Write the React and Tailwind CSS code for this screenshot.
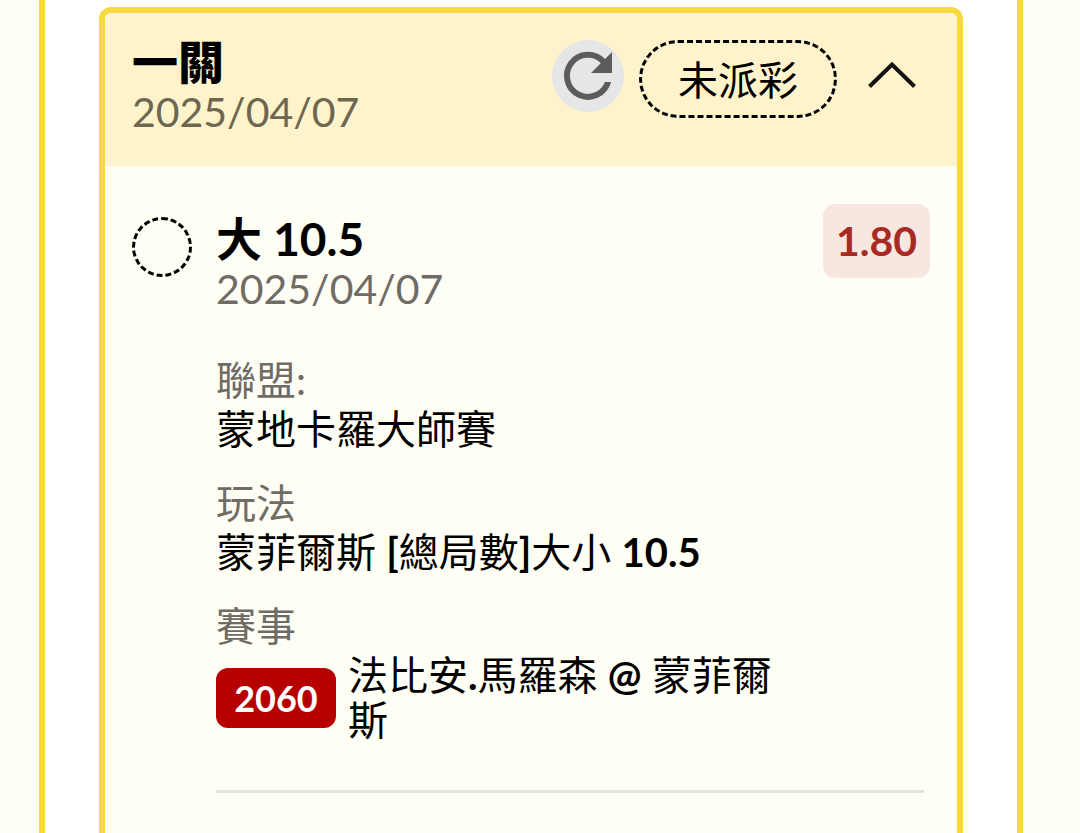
const legs = [
  {
    pick: "大",
    line: "10.5",
    date: "2025/04/07",
    odds: "1.80",
    league: "蒙地卡羅大師賽",
    code: "2060",
  },
];

function RefreshIcon() {
  return (
    <svg viewBox="0 0 72 72" className="size-full" aria-hidden="true">
      <path
        d="M51.5 21.7 A21 21 0 1 0 56.3 41"
        fill="none"
        stroke="#5c5c5e"
        strokeWidth="6"
      />
      <path d="M60 12 V33 H39 Z" fill="#5c5c5e" />
      <path d="M52 38 H62 V42 H52 Z" fill="#e5e6e8" />
    </svg>
  );
}

function ChevronUpIcon() {
  return (
    <svg viewBox="0 0 48 28" className="h-7 w-12" aria-hidden="true">
      <path d="M1.5 24.5 L24 2.5 L46.5 24.5" fill="none" stroke="#111" strokeWidth="4" />
    </svg>
  );
}

function Header() {
  return (
    <header className="flex items-start bg-[#fff3cc] px-[27px] pb-[29px] pt-6">
      <div className="flex-1 leading-[50px]">
        <h1 className="text-[46px] font-black">一關</h1>
        <time className="block text-[41px] text-[#6d6650]">2025/04/07</time>
      </div>
      <div className="flex items-start pt-[3px]">
        <button
          type="button"
          aria-label="重新整理"
          className="mr-[15px] size-[72px] rounded-full bg-[#e5e6e8]"
        >
          <RefreshIcon />
        </button>
        <span className="mr-[31px] flex h-[78px] w-[198px] items-center justify-center rounded-full border-3 border-dashed border-black pt-0.5 text-[40px]">
          未派彩
        </span>
        <button type="button" aria-label="收合" className="mr-3.5 flex h-[72px] items-center">
          <ChevronUpIcon />
        </button>
      </div>
    </header>
  );
}

function Field({ label, children }) {
  return (
    <div>
      <dt className="text-[#6f6c65]">{label}</dt>
      <dd>{children}</dd>
    </div>
  );
}

function Leg({ leg }) {
  return (
    <section className="px-[27px] pt-[38px]">
      <div className="flex items-start">
        <span className="mr-6 mt-[13px] size-[60px] shrink-0 rounded-full border-3 border-dashed border-black" />
        <div className="flex-1 pt-2.5 leading-[50px]">
          <h2 className="text-[46px] font-bold">
            {leg.pick} {leg.line}
          </h2>
          <time className="block text-[41px] text-[#6f6c65]">{leg.date}</time>
        </div>
        <span className="flex h-[74px] w-[107px] items-center justify-center rounded-xl bg-[#f7e7e0] text-[41px] font-bold text-[#a82a23]">
          {leg.odds}
        </span>
      </div>
      <dl className="ml-[84px] mr-1.5 mt-[42px] flex flex-col gap-[25px] border-b-3 border-[#e3e3db] pb-[47px] text-[40px] leading-[49px]">
        <Field label="聯盟:">{leg.league}</Field>
        <Field label="玩法">
          蒙菲爾斯 <b>[</b>總局數<b>]</b>大小 <b>{leg.line}</b>
        </Field>
        <Field label="賽事">
          <div className="flex items-center gap-3 pr-[145px] pt-0.5">
            <span className="flex h-[60px] w-[120px] shrink-0 items-center justify-center rounded-xl bg-[#b60000] text-[36px] font-bold text-white">
              {leg.code}
            </span>
            <span className="leading-[45px]">
              法比安<b>.</b>馬羅森 <b>@</b> 蒙菲爾斯
            </span>
          </div>
        </Field>
      </dl>
    </section>
  );
}

export default function App() {
  return (
    <div className="flex min-h-screen bg-[#fffef5] pl-[39px] pr-[57px] font-['Lato','Noto_Sans_CJK_TC',sans-serif] text-black">
      <main
        lang="zh-Hant"
        className="flex flex-1 flex-col border-x-6 border-[#f6d83f] bg-white px-[54px] pt-[7px]"
      >
        <article className="flex-1 overflow-hidden rounded-t-xl border-x-6 border-t-6 border-[#f6d83f] bg-[#fffef5]">
          <Header />
          {legs.map((leg) => (
            <Leg key={leg.code} leg={leg} />
          ))}
        </article>
      </main>
    </div>
  );
}
